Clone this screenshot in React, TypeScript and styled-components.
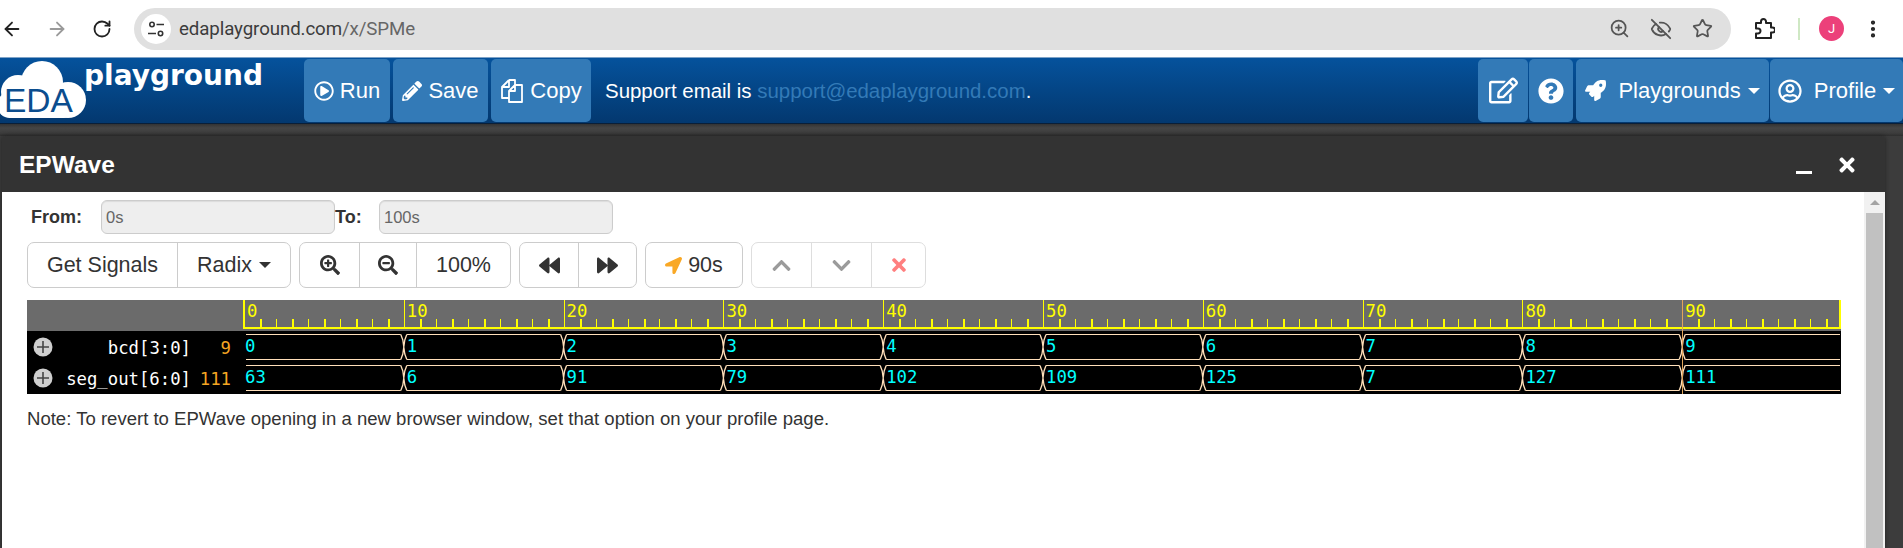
import React from "react";
import styled, { createGlobalStyle } from "styled-components";
import { ArrowLeft, ArrowRight, RotateCw, ZoomIn, EyeOff, Star, EllipsisVertical } from "lucide-react";
import {
  FaRegPlayCircle, FaPencilAlt, FaRegEdit, FaQuestionCircle, FaRocket, FaRegUserCircle,
  FaSearchPlus, FaSearchMinus, FaBackward, FaForward, FaLocationArrow, FaChevronUp, FaChevronDown, FaTimes,
} from "react-icons/fa";

const Global = createGlobalStyle`
  html, body { margin: 0; padding: 0; height: 548px; overflow: hidden; background: #fff; }
  * { box-sizing: border-box; }
  body { font-family: "Liberation Sans", Arial, sans-serif; }
`;

const Page = styled.div`
  width: 1903px; height: 548px; display: flex; flex-direction: column; overflow: hidden;
`;

/* browser chrome */
const Chrome = styled.div`
  height: 57px; flex: none; display: flex; align-items: center; background: #fff; color: #333;
`;
const ChromeNav = styled.div`
  width: 134px; flex: none; display: flex; align-items: center; gap: 21px; padding-left: 0;
`;
const NavIcon = styled.span<{ $muted?: boolean }>`
  display: flex; width: 24px; justify-content: center; color: ${(p) => (p.$muted ? "#9a9a9a" : "#222")};
`;
const Pill = styled.div`
  width: 1597px; height: 42px; border-radius: 21px; background: #e0e0e0; display: flex; align-items: center;
  padding: 0 18px 0 7px;
`;
const SiteBadge = styled.span`
  width: 30px; height: 30px; border-radius: 50%; background: #fff; display: flex; align-items: center;
  justify-content: center; margin-right: 8px; flex: none;
`;
const Url = styled.span`
  font-family: "Roboto", "Open Sans", sans-serif; font-size: 18.7px; color: #3c3c3c; letter-spacing: -0.1px;
`;
const Dim = styled.span` color: #666; `;
const PillIcons = styled.div`
  margin-left: auto; display: flex; align-items: center; gap: 20px; color: #555;
`;
const ChromeRight = styled.div`
  flex: 1; display: flex; align-items: center; position: relative; padding-left: 22px; color: #222;
`;
const Divider = styled.span`
  width: 2px; height: 22px; background: #cfe8c4; margin-left: 23px;
`;
const Avatar = styled.span`
  width: 25px; height: 25px; border-radius: 50%; background: #ec407a; color: #fff; font-size: 13px;
  display: flex; align-items: center; justify-content: center; margin-left: 19px;
  font-family: "Roboto", sans-serif;
`;
const Kebab = styled.span` display: flex; margin-left: 18px; `;
const ChromeSvg = styled.svg` display: block; flex: none; `;

/* site navbar */
const Nav = styled.div`
  height: 67px; flex: none; display: flex; align-items: stretch; padding: 1px 0 1px;
  background: linear-gradient(#05529c, #03386f); border-top: 1px solid #7fa3c7; border-bottom: 1px solid #0a1f38;
`;
const Logo = styled.div`
  width: 304px; flex: none; position: relative; overflow: hidden;
`;
const LogoSvg = styled.svg` display: block; `;
const LogoWord = styled.text`
  font-family: "DejaVu Sans", sans-serif; font-weight: 700; font-size: 28px; fill: #fff;
`;
const LogoEda = styled.text`
  font-family: "Liberation Sans", sans-serif; font-size: 33.5px; fill: #0b4d8e;
`;
const NavBtn = styled.div<{ $w: number; $gap?: number }>`
  width: ${(p) => p.$w}px; margin-right: ${(p) => p.$gap ?? 3}px; flex: none; background: #337ab7; border-radius: 5px;
  display: flex; align-items: center; justify-content: center; gap: 6px; color: #fff; font-size: 22px;
`;
const Support = styled.div`
  color: #fff; font-size: 20.45px; align-self: center; margin-left: 11px; white-space: nowrap;
`;
const SupportLink = styled.span` color: #337ab7; `;
const NavRight = styled.div` margin-left: auto; display: flex; align-items: stretch; `;
const Caret = styled.span`
  width: 0; height: 0; border-left: 6px solid transparent; border-right: 6px solid transparent;
  border-top: 6px solid currentColor; display: inline-block; margin-left: 1px;
`;

/* backdrop & modal */
const Backdrop = styled.div`
  flex: 1; min-height: 0; padding: 12px 18px 0 2px; display: flex;
  background: linear-gradient(#333 0, #454545 4px, #3d3d3d 9px, #2e2e2e 12px, #3c3c3c 12px);
`;
const Modal = styled.div`
  flex: 1; display: flex; flex-direction: column; min-width: 0; box-shadow: 0 0 4px #222; border-radius: 4px 4px 0 0;
  overflow: hidden;
`;
const ModalHead = styled.div`
  height: 56px; flex: none; background: #333; color: #fff; display: flex; align-items: center; padding: 1px 27px 0 17px;
  font-size: 24.5px; font-weight: 700;
`;
const HeadTools = styled.div` margin-left: auto; display: flex; align-items: center; gap: 24px; `;
const Minimize = styled.span` width: 16px; height: 3px; background: #fff; margin-top: 16px; `;
const ModalBody = styled.div` flex: 1; min-height: 0; background: #fff; display: flex; `;
const Content = styled.div` flex: 1; padding: 8px 22px 0 25px; min-width: 0; display: flex; flex-direction: column; `;
const RangeRow = styled.div` display: flex; align-items: center; height: 34px; color: #333; `;
const RangeLabel = styled.span<{ $w: number }>`
  width: ${(p) => p.$w}px; font-size: 18px; font-weight: 700; flex: none; padding-left: ${(p) => (p.$w > 60 ? 4 : 0)}px;
`;
const RangeInput = styled.div`
  width: 234px; height: 34px; flex: none; background: #eee; border: 1px solid #ccc; border-radius: 6px;
  font-size: 16.5px; color: #666; display: flex; align-items: center; padding-left: 4px;
  box-shadow: inset 0 1px 1px rgba(0,0,0,.08);
`;
const Toolbar = styled.div` display: flex; margin-top: 8px; height: 46px; gap: 8px; `;
const Group = styled.div<{ $off?: boolean }>`
  display: flex; border: 1px solid #ccc; border-radius: 7px; color: #333; opacity: ${(p) => (p.$off ? 0.65 : 1)};
`;
const ToolBtn = styled.div<{ $w: number; $c?: string }>`
  width: ${(p) => p.$w}px; flex: none; display: flex; align-items: center; justify-content: center; gap: 6px;
  font-size: 21.5px; color: ${(p) => p.$c ?? "#333"}; border-left: 1px solid #ccc;
  &:first-child { border-left: 0; }
`;
const WaveSvg = styled.svg` display: block; margin-top: 12px; flex: none; `;
const Mono = styled.text<{ $c: string; $end?: boolean }>`
  font-family: "DejaVu Sans Mono", monospace; font-size: 17.3px; fill: ${(p) => p.$c};
  text-anchor: ${(p) => (p.$end ? "end" : "start")};
`;
const Note = styled.p`
  margin: 14px 0 0 0; font-size: 18.56px; color: #333;
`;
const Scrollbar = styled.div`
  width: 21px; flex: none; background: #f1f1f1; display: flex; flex-direction: column; align-items: center; padding-top: 8px;
`;
const ScrollArrow = styled.span`
  width: 0; height: 0; border-left: 5px solid transparent; border-right: 5px solid transparent;
  border-bottom: 5px solid #a3a3a3;
`;
const ScrollThumb = styled.div` width: 17px; flex: 1; background: #c1c1c1; margin-top: 8px; `;

const X0 = 217;
const STEP = 159.8;
const rows = [
  { name: "bcd[3:0]", val: "9", data: [0, 1, 2, 3, 4, 5, 6, 7, 8, 9], top: 34, bot: 59, label: 54, cy: 47, text: 52 },
  { name: "seg_out[6:0]", val: "111", data: [63, 6, 91, 79, 102, 109, 125, 7, 127, 111], top: 65, bot: 90, label: 85, cy: 78, text: 83 },
];

function Wave() {
  const W = 1814;
  const end = W - 1;
  const edges = Array.from({ length: 10 }, (_, i) => X0 + i * STEP);
  const ticks: number[] = [];
  for (let x = X0; x < end - 1; x += STEP / 10) ticks.push(x);
  return (
    <WaveSvg width={W} height={94} viewBox="0 0 1814 94" shapeRendering="crispEdges">
      <rect width={W} height={31} fill="#6b6b6b" />
      <rect y={31} width={W} height={63} fill="#000" />
      <rect x={X0 - 1} y={27} width={W - X0 + 1} height={2} fill="#ffff00" />
      {ticks.map((x, i) =>
        i % 10 === 0 ? null : <rect key={i} x={Math.round(x)} y={19} width={i % 2 ? 2 : 1} height={8} fill="#ffff00" />
      )}
      {edges.map((x, i) => (
        <g key={i}>
          <rect x={Math.round(x) - (i ? 0 : 1)} y={0} width={i ? 1 : 2} height={29} fill="#ffff00" />
          <Mono $c="#ffff00" x={x + 3} y={17}>{i * 10}</Mono>
        </g>
      ))}
      <rect x={end - 1} y={0} width={2} height={29} fill="#ffff00" />
      <g shapeRendering="auto">
        {rows.map((r) => (
          <g key={r.name}>
            <circle cx={16} cy={r.cy} r={9.5} fill="#cfcfcf" />
            <path d={`M10 ${r.cy}h12M16 ${r.cy - 6}v12`} stroke="#444" strokeWidth={1.6} />
            <Mono $c="#ffffff" $end x={164} y={r.label}>{r.name}</Mono>
            <Mono $c="#f5a623" $end x={204} y={r.label}>{r.val}</Mono>
            {r.data.map((v, i) => {
              const x0 = edges[i];
              const x1 = i < 9 ? edges[i + 1] : end;
              const a = i === 0 ? x0 + 2 : x0 + 3;
              const b = i < 9 ? x1 - 3 : x1;
              return (
                <g key={i}>
                  <path d={`M${a} ${r.top + 0.5}H${b}M${a} ${r.bot + 0.5}H${b}`} stroke="#ffdfba" strokeWidth={1.2} fill="none" />
                  {i > 0 && (
                    <path
                      d={`M${x0 - 3} ${r.top + 0.5}L${x0 - 1} ${r.top + 6}L${x0 + 1} ${r.bot - 5}L${x0 + 3} ${r.bot + 0.5}M${x0 + 3} ${r.top + 0.5}L${x0 + 1} ${r.top + 6}L${x0 - 1} ${r.bot - 5}L${x0 - 3} ${r.bot + 0.5}`}
                      stroke="#ffdfba" strokeWidth={1.3} fill="none"
                    />
                  )}
                  <Mono $c="#00ffff" x={x0 + (i ? 3 : 1)} y={r.text}>{v}</Mono>
                </g>
              );
            })}
          </g>
        ))}
      </g>
      <rect x={Math.round(edges[9])} y={0} width={1} height={94} fill="#e2a55a" />
    </WaveSvg>
  );
}

export default function App() {
  return (
    <Page>
      <Global />
      <Chrome>
        <ChromeNav>
          <NavIcon><ArrowLeft size={22} strokeWidth={2} /></NavIcon>
          <NavIcon $muted><ArrowRight size={22} strokeWidth={2} /></NavIcon>
          <NavIcon><RotateCw size={20} strokeWidth={2.2} /></NavIcon>
        </ChromeNav>
        <Pill>
          <SiteBadge>
            <svg width="18" height="18" viewBox="0 0 18 18" fill="none" stroke="#333" strokeWidth="1.6">
              <circle cx="5" cy="4.5" r="2.2" />
              <path d="M9.5 4.5H17M1 13.5H9" />
              <circle cx="13.5" cy="13.5" r="2.2" />
            </svg>
          </SiteBadge>
          <Url>edaplayground.com<Dim>/x/SPMe</Dim></Url>
          <PillIcons>
            <ZoomIn size={21} />
            <EyeOff size={22} />
            <Star size={21} />
          </PillIcons>
        </Pill>
        <ChromeRight>
          <ChromeSvg width="22" height="22" viewBox="0 0 22 22" fill="none" stroke="#222" strokeWidth="2" strokeLinejoin="round">
            <path d="M3 5H8V3.5a2.5 2.5 0 0 1 5 0V5H18V9.5H19.5a2.5 2.5 0 0 1 0 5H18V20H3V15.5H5a2.5 2.5 0 0 0 0-5H3Z" />
          </ChromeSvg>
          <Divider />
          <Avatar>J</Avatar>
          <Kebab><EllipsisVertical size={22} strokeWidth={2.6} /></Kebab>
        </ChromeRight>
      </Chrome>
      <Nav>
        <Logo>
          <LogoSvg width="304" height="64" viewBox="0 0 304 64">
            <g fill="#fff">
              <circle cx="42" cy="23" r="21" />
              <circle cx="18" cy="33" r="17" />
              <circle cx="68" cy="41" r="18" />
              <circle cx="10" cy="46" r="13" />
              <rect x="4" y="36" width="68" height="23" rx="8" />
            </g>
            <LogoEda x="4" y="53">EDA</LogoEda>
            <LogoWord x="84" y="26">playground</LogoWord>
          </LogoSvg>
        </Logo>
        <NavBtn $w={86}><FaRegPlayCircle size={20} />Run</NavBtn>
        <NavBtn $w={95}><FaPencilAlt size={20} />Save</NavBtn>
        <NavBtn $w={100}>
          <ChromeSvg width="24" height="25" viewBox="0 0 24 25" fill="none" stroke="#fff" strokeWidth="1.8" strokeLinejoin="round">
            <path d="M9 2L2 9V20H9M9 2H15V7M9 2V9H2" />
            <path d="M15 7L9 13V24H22V7ZM15 7V13H9" />
          </ChromeSvg>
          Copy
        </NavBtn>
        <Support>Support email is <SupportLink>support@edaplayground.com</SupportLink>.</Support>
        <NavRight>
          <NavBtn $w={50} $gap={1}><FaRegEdit size={29} /></NavBtn>
          <NavBtn $w={44} $gap={3}><FaQuestionCircle size={26} /></NavBtn>
          <NavBtn $w={193} $gap={1}><FaRocket size={21} /><span>&nbsp;Playgrounds</span><Caret /></NavBtn>
          <NavBtn $w={133} $gap={0}><FaRegUserCircle size={24} /><span>&nbsp;Profile</span><Caret /></NavBtn>
        </NavRight>
      </Nav>
      <Backdrop>
        <Modal>
          <ModalHead>
            EPWave
            <HeadTools>
              <Minimize />
              <FaTimes size={22} />
            </HeadTools>
          </ModalHead>
          <ModalBody>
            <Content>
              <RangeRow>
                <RangeLabel $w={74}>From:</RangeLabel>
                <RangeInput>0s</RangeInput>
                <RangeLabel $w={44}>To:</RangeLabel>
                <RangeInput>100s</RangeInput>
              </RangeRow>
              <Toolbar>
                <Group>
                  <ToolBtn $w={149}>Get Signals</ToolBtn>
                  <ToolBtn $w={113}>Radix <Caret /></ToolBtn>
                </Group>
                <Group>
                  <ToolBtn $w={59}><FaSearchPlus size={20} /></ToolBtn>
                  <ToolBtn $w={57}><FaSearchMinus size={20} /></ToolBtn>
                  <ToolBtn $w={94}>100%</ToolBtn>
                </Group>
                <Group>
                  <ToolBtn $w={58}><FaBackward size={21} /></ToolBtn>
                  <ToolBtn $w={58}><FaForward size={21} /></ToolBtn>
                </Group>
                <Group>
                  <ToolBtn $w={96}><FaLocationArrow size={17} color="#f9a825" />90s</ToolBtn>
                </Group>
                <Group $off>
                  <ToolBtn $w={59}><FaChevronUp size={21} color="#666" /></ToolBtn>
                  <ToolBtn $w={60}><FaChevronDown size={21} color="#666" /></ToolBtn>
                  <ToolBtn $w={54} $c="#ff3b3b"><FaTimes size={20} /></ToolBtn>
                </Group>
              </Toolbar>
              <Wave />
              <Note>Note: To revert to EPWave opening in a new browser window, set that option on your profile page.</Note>
            </Content>
            <Scrollbar>
              <ScrollArrow />
              <ScrollThumb />
            </Scrollbar>
          </ModalBody>
        </Modal>
      </Backdrop>
    </Page>
  );
}
